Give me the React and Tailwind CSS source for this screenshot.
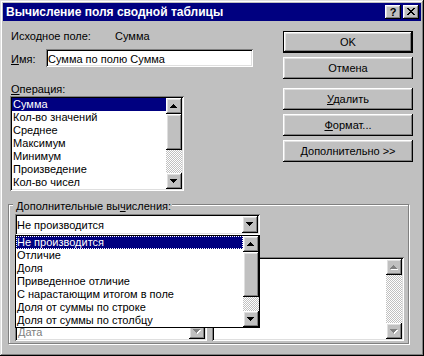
import React from 'react';

const raised = 'shadow-[inset_-1px_-1px_#000,inset_1px_1px_#fff,inset_-2px_-2px_#808080,inset_2px_2px_#dfdfdf]';
const sunken = 'shadow-[inset_1px_1px_#808080,inset_-1px_-1px_#fff,inset_2px_2px_#000,inset_-2px_-2px_#dfdfdf]';
const dither = 'bg-[image:repeating-conic-gradient(#c0c0c0_0%_25%,#ffffff_0%_50%)] bg-size-[2px_2px]';

const UP = 'M3 0h1v1H3zM2 1h3v1H2zM1 2h5v1H1zM0 3h7v1H0z';
const DOWN = 'M0 0h7v1H0zM1 1h5v1H1zM2 2h3v1H2zM3 3h1v1H3z';

function Arrow({ dir = 'down', disabled }) {
  const d = dir === 'up' ? UP : DOWN;
  return (
    <svg width="8" height="5" viewBox="0 0 8 5" shapeRendering="crispEdges" className="block">
      {disabled && <path d={d} fill="#fff" transform="translate(1 1)" />}
      <path d={d} fill={disabled ? '#808080' : '#000'} />
    </svg>
  );
}

function ArrowBtn({ dir, disabled, className = '' }) {
  return (
    <div className={`w-[16px] h-[16px] shrink-0 bg-[#c0c0c0] pl-[4px] pt-[6px] ${raised} ${className}`}>
      <Arrow dir={dir} disabled={disabled} />
    </div>
  );
}

function Button({ children, isDefault, className = '' }) {
  const bevel = isDefault
    ? 'shadow-[inset_0_0_0_1px_#000,inset_-2px_-2px_#000,inset_2px_2px_#fff,inset_-3px_-3px_#808080,inset_3px_3px_#dfdfdf]'
    : raised;
  return (
    <div className={`h-[22px] flex items-center justify-center bg-[#c0c0c0] ${bevel} ${className}`}>
      <span className="leading-[13px]">{children}</span>
    </div>
  );
}

const operations = ['Сумма', 'Кол-во значений', 'Среднее', 'Максимум', 'Минимум', 'Произведение', 'Кол-во чисел'];
const extraCalcs = [
  'Отличие',
  'Доля',
  'Приведенное отличие',
  'С нарастающим итогом в поле',
  'Доля от суммы по строке',
  'Доля от суммы по столбцу',
];

export default function App() {
  return (
    <div className="w-[424px] h-[356px] bg-[#c0c0c0] p-[3px] flex flex-col text-black text-[11px] leading-[13px] font-['Liberation_Sans',Arial,sans-serif] shadow-[inset_-1px_-1px_#000,inset_1px_1px_#dfdfdf,inset_-2px_-2px_#808080,inset_2px_2px_#fff]">
      {/* Title bar */}
      <div className="h-[18px] shrink-0 bg-[#000080] flex items-center pl-[3px] pr-[2px]">
        <span className="text-white font-bold text-[12px] leading-[14px]">Вычисление поля сводной таблицы</span>
        <div className="ml-auto flex gap-[2px]">
          <div className={`w-[16px] h-[14px] bg-[#c0c0c0] flex items-center justify-center font-bold text-[11px] leading-none ${raised}`}>?</div>
          <div className={`w-[16px] h-[14px] bg-[#c0c0c0] pl-[4px] pt-[3px] ${raised}`}>
            <svg width="8" height="7" viewBox="0 0 8 7" shapeRendering="crispEdges" className="block">
              <path
                d="M0 0h2v1H0zM6 0h2v1H6zM1 1h2v1H1zM5 1h2v1H5zM2 2h4v1H2zM3 3h2v1H3zM2 4h4v1H2zM1 5h2v1H1zM5 5h2v1H5zM0 6h2v1H0zM6 6h2v1H6z"
                fill="#000"
              />
            </svg>
          </div>
        </div>
      </div>

      {/* Top section */}
      <div className="flex">
        <div className="ml-[7px] pt-[9px] flex flex-col">
          <div className="flex h-[13px]">
            <span className="w-[105px] pl-[1px]">Исходное поле:</span>
            <span>Сумма</span>
          </div>
          <div className="flex mt-[6px]">
            <span className="w-[36px] pl-[1px] mt-[4px]"><span className="underline">И</span>мя:</span>
            <div className={`w-[207px] h-[18px] bg-white pl-[2px] pt-[4px] ${sunken}`}>Сумма по полю Сумма</div>
          </div>
          <span className="mt-[16px] pl-[1px]"><span className="underline">О</span>перация:</span>
          <div className={`w-[174px] h-[95px] bg-white p-[2px] flex ${sunken}`}>
            <div className="flex-1 flex flex-col">
              {operations.map((op, i) => (
                <div key={op} className={`h-[13px] pl-[1px] ${i === 0 ? 'bg-[#000080] text-white' : ''}`}>{op}</div>
              ))}
            </div>
            <div className="w-[16px] flex flex-col">
              <ArrowBtn dir="up" />
              <div className={`h-[36px] bg-[#c0c0c0] ${raised}`} />
              <div className={`flex-1 ${dither}`} />
              <ArrowBtn dir="down" />
            </div>
          </div>
        </div>

        <div className="ml-auto mr-[8px] mt-[10px] w-[130px] flex flex-col">
          <Button isDefault>OK</Button>
          <Button className="mt-[4px]">Отмена</Button>
          <Button className="mt-[9px]"><span className="underline">У</span>далить</Button>
          <Button className="mt-[4px]"><span className="underline">Ф</span>ормат...</Button>
          <Button className="mt-[4px]"><span className="underline">Д</span>ополнительно &gt;&gt;</Button>
        </div>
      </div>

      {/* Group box */}
      <div className="relative mt-[13px] ml-[5px] w-[401px] h-[140px] border border-[#808080] shadow-[inset_1px_1px_#fff,1px_1px_#fff] pt-[9px] pl-[6px]">
        <span className="absolute left-[4px] top-[-5px] pl-[3px] pr-[1px] bg-[#c0c0c0]">
          Дополнительные вы<span className="underline">ч</span>исления:
        </span>

        <div className="relative w-[245px]">
          <div className={`h-[21px] bg-white p-[2px] flex ${sunken}`}>
            <div className="flex-1 pt-[3px]">Не производится</div>
            <div className={`w-[16px] h-[17px] bg-[#c0c0c0] pl-[4px] pt-[6px] ${raised}`}>
              <Arrow dir="down" />
            </div>
          </div>

          {/* Open dropdown list */}
          <div className="absolute left-0 top-full z-10 w-[245px] h-[93px] bg-white border border-black flex">
            <div className="flex-1 flex flex-col">
              <div className="h-[13px] leading-[11px] bg-[#000080] text-white border border-dotted border-white">Не производится</div>
              {extraCalcs.map((c) => (
                <div key={c} className="h-[13px] pl-[1px]">{c}</div>
              ))}
            </div>
            <div className="w-[16px] flex flex-col">
              <ArrowBtn dir="up" />
              <div className={`h-[45px] bg-[#c0c0c0] ${raised}`} />
              <div className={`flex-1 ${dither}`} />
              <ArrowBtn dir="down" />
            </div>
          </div>
        </div>

        <div className="mt-[22px] flex gap-[5px]">
          <div className={`w-[192px] h-[84px] bg-white p-[2px] flex ${sunken}`}>
            <div className="flex-1 flex flex-col justify-end">
              <div className="h-[13px] pl-[1px] text-[#808080]">Дата</div>
            </div>
            <div className="w-[16px] flex flex-col">
              <ArrowBtn dir="up" disabled />
              <div className={`flex-1 ${dither}`} />
              <ArrowBtn dir="down" disabled />
            </div>
          </div>
          <div className={`w-[192px] h-[84px] bg-white p-[2px] flex ${sunken}`}>
            <div className="flex-1" />
            <div className="w-[16px] flex flex-col">
              <ArrowBtn dir="up" disabled />
              <div className={`flex-1 ${dither}`} />
              <ArrowBtn dir="down" disabled />
            </div>
          </div>
        </div>
      </div>
    </div>
  );
}
